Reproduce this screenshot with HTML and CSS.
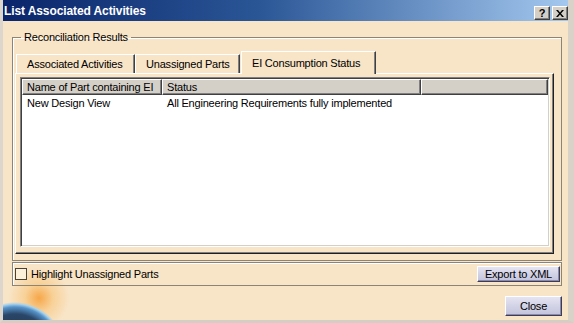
FILE: index.html
```html
<!DOCTYPE html>
<html lang="en">
<head>
    <meta charset="UTF-8">
    <title>List Associated Activities</title>
    <link rel="stylesheet" href="styles.css">
</head>
<body>
    <div class="window">
        <div class="titlebar">
            <span class="title">List Associated Activities</span>
            <div class="caption-buttons">
                <span class="cap-btn">?</span>
                <span class="cap-btn">
                    <svg width="8" height="7" viewBox="0 0 8 7"><path d="M0 0h2l2 2.5L6 0h2L5 3.5 8 7H6L4 4.5 2 7H0l3-3.5z" fill="#000"/></svg>
                </span>
            </div>
        </div>

        <div class="content">
            <fieldset class="group">
                <legend>Reconciliation Results</legend>
                <div class="tabs">
                    <div class="tab tab-one">Associated Activities</div>
                    <div class="tab tab-two">Unassigned Parts</div>
                    <div class="tab tab-three active">EI Consumption Status</div>
                </div>
                <div class="pane">
                    <div class="list">
                        <div class="list-header">
                            <div class="col col-name">Name of Part containing EI</div>
                            <div class="col col-status">Status</div>
                            <div class="col col-rest"></div>
                        </div>
                        <div class="list-row">
                            <div class="cell col-name">New Design View</div>
                            <div class="cell col-status">All Engineering Requirements fully implemented</div>
                        </div>
                    </div>
                </div>
            </fieldset>

            <div class="options">
                <label class="check">
                    <span class="checkbox"></span>
                    Highlight Unassigned Parts
                </label>
                <button class="btn btn-export">Export to XML</button>
            </div>

            <div class="footer">
                <button class="btn btn-close">Close</button>
            </div>
        </div>
    </div>
</body>
</html>
```

FILE: styles.css
```css
body {
    margin: 0;
    font-family: "Liberation Sans", Arial, sans-serif;
    font-size: 11px;
    letter-spacing: -0.2px;
    color: #000;
    background-color: #f8e4c6;
}
.window {
    width: 574px;
    height: 323px;
    box-sizing: border-box;
    display: flex;
    flex-direction: column;
    border-left: 3px solid #dcd6cc;
    border-right: 6px solid #d8d2c8;
    border-bottom: 3px solid #d4cec4;
    background-color: #f8e4c6;
    background-image:
        radial-gradient(circle at 12px 352px, #18263a 0, #2a4668 38px, #5592c8 45px, #a6d2ee 48px, rgba(166, 210, 238, 0) 50px),
        radial-gradient(circle at 36px 298px, rgba(246, 160, 60, 0.9) 0, rgba(248, 196, 120, 0.6) 14px, rgba(248, 228, 198, 0) 30px);
    overflow: hidden;
}
.titlebar {
    height: 21px;
    margin-left: -3px;
    margin-right: -6px;
    display: flex;
    justify-content: space-between;
    align-items: flex-end;
    background: linear-gradient(to right, #0a246a 0%, #2a5696 45%, #a6caf0 100%);
}
.title {
    color: #fff;
    font-weight: bold;
    font-size: 12px;
    letter-spacing: -0.1px;
    padding-left: 4px;
    align-self: center;
}
.caption-buttons {
    display: flex;
    gap: 2px;
    padding-right: 6px;
    padding-bottom: 1px;
}
.cap-btn {
    width: 16px;
    height: 14px;
    box-sizing: border-box;
    display: flex;
    align-items: center;
    justify-content: center;
    background-color: #d4d0c8;
    border: 1px solid;
    border-color: #fff #404040 #404040 #fff;
    box-shadow: inset -1px -1px 0 #808080;
    font-weight: bold;
    font-size: 11px;
}
.content {
    flex: 1;
    display: flex;
    flex-direction: column;
    padding: 0 6px 0 9px;
}
.group {
    margin: 10px 0 0 0;
    padding: 6px 7px 6px 2px;
    border: 1px solid #8c8577;
    box-shadow: inset 1px 1px 0 #fff;
}
.group legend {
    padding: 0 3px;
    margin-left: 6px;
    line-height: 13px;
}
.tabs {
    display: flex;
    align-items: flex-end;
    height: 23px;
    padding-left: 1px;
}
.tab {
    height: 19px;
    box-sizing: border-box;
    padding: 3px 0 0 10px;
    border-top: 1px solid #fff;
    border-left: 1px solid #fff;
    border-right: 1px solid #404040;
    box-shadow: inset -1px 0 0 #808080;
}
.tab-one {
    width: 119px;
}
.tab-two {
    width: 105px;
}
.tab-three {
    width: 135px;
}
.tab.active {
    height: 23px;
    margin-left: 1px;
    margin-bottom: -1px;
    padding-top: 5px;
    position: relative;
    background-color: #f8e4c6;
}
.pane {
    height: 181px;
    box-sizing: border-box;
    padding: 3px 3px 6px 4px;
    border: 1px solid;
    border-color: #fff #202020 #202020 #fff;
    box-shadow: inset -1px -1px 0 #808080;
}
.list {
    height: 100%;
    box-sizing: border-box;
    background-color: #fff;
    border: 1px solid;
    border-color: #808080 #fff #fff #808080;
    box-shadow: inset 1px 1px 0 #404040, inset -1px -1px 0 #d4d0c8;
    padding: 1px;
}
.list-header {
    display: flex;
    height: 16px;
}
.col {
    box-sizing: border-box;
    background-color: #d4d0c8;
    border: 1px solid;
    border-color: #fff #404040 #404040 #fff;
    box-shadow: inset -1px -1px 0 #808080;
    padding: 1px 0 0 4px;
    line-height: 12px;
    white-space: nowrap;
    overflow: hidden;
}
.col-name {
    width: 140px;
    flex: none;
}
.col-status {
    width: 259px;
    flex: none;
}
.col-rest {
    flex: 1;
}
.list-row {
    display: flex;
    padding-top: 2px;
    line-height: 13px;
}
.cell {
    padding-left: 5px;
    box-sizing: border-box;
    white-space: nowrap;
}
.options {
    height: 24px;
    box-sizing: border-box;
    margin-top: 1px;
    display: flex;
    align-items: center;
    justify-content: space-between;
    padding: 0 1px 0 2px;
    border: 1px solid #8c8577;
    box-shadow: inset 1px 1px 0 #fff;
}
.check {
    display: flex;
    align-items: center;
    gap: 4px;
}
.checkbox {
    width: 12px;
    height: 12px;
    box-sizing: border-box;
    border: 1px solid #4a4234;
    background-color: #fcf0da;
}
.btn {
    font-family: "Liberation Sans", Arial, sans-serif;
    font-size: 11px;
    letter-spacing: -0.2px;
    color: #000;
    box-sizing: border-box;
    padding: 0;
    background: linear-gradient(#e4e4f2, #c2c2dc);
    border: 1px solid;
    border-color: #fff #3c3c58 #3c3c58 #fff;
    box-shadow: inset -1px -1px 0 #8a8aa8;
}
.btn-export {
    width: 83px;
    height: 16px;
}
.footer {
    display: flex;
    justify-content: flex-end;
    padding-top: 10px;
}
.btn-close {
    width: 57px;
    height: 20px;
}
```
